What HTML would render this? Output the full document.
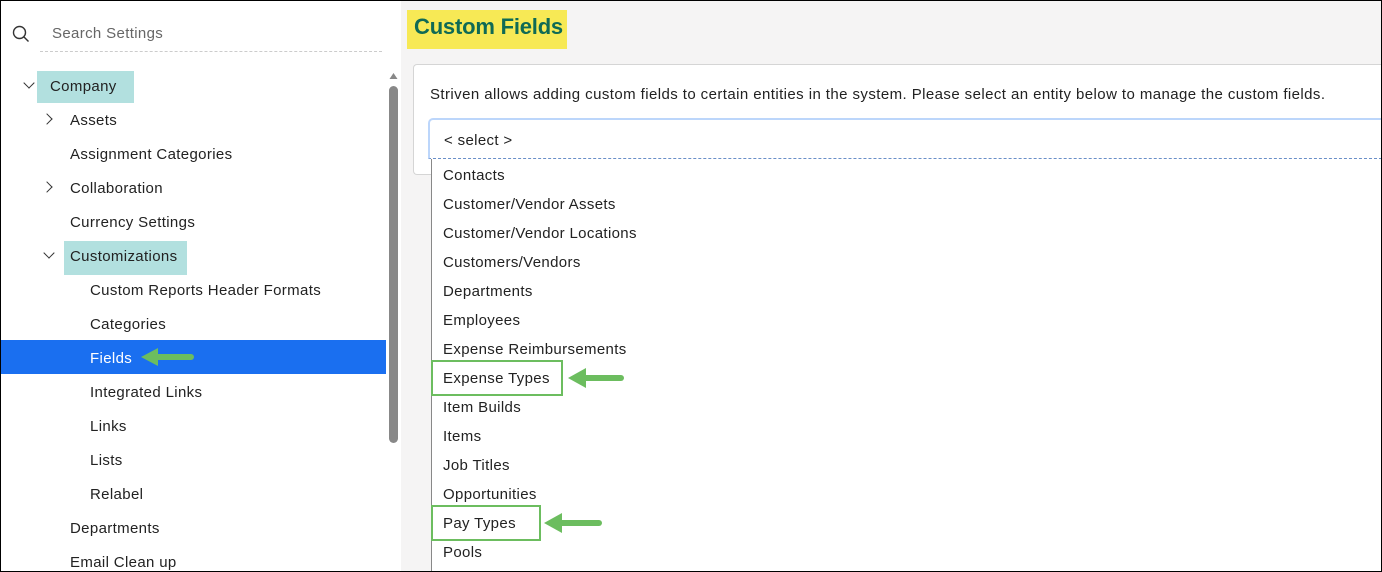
<!DOCTYPE html>
<html><head><meta charset="utf-8"><style>
*{margin:0;padding:0;box-sizing:border-box}
body{width:1382px;height:572px;overflow:hidden;font-family:"Liberation Sans",sans-serif;color:#222;background:#fff;position:relative}
.frame{position:absolute;inset:0;border:1px solid #000;z-index:10;pointer-events:none}
.side{position:absolute;left:0;top:0;width:401px;height:572px;background:#fff}
.main{position:absolute;left:401px;top:0;right:0;height:572px;background:#f5f4f4}
.t{position:absolute;font-size:15px;white-space:nowrap;letter-spacing:0.35px}
.hl{position:absolute;background:#b2e0df}
.chev{position:absolute;width:8px;height:8px;border-right:1.3px solid #333;border-bottom:1.3px solid #333}
.item{position:absolute;left:443px;font-size:15px;color:#222;letter-spacing:0.35px}
.gbox{position:absolute;border:2px solid #6cbd5f}
</style></head><body>
<div class="side">
  <svg style="position:absolute;left:12px;top:25px" width="18" height="18" viewBox="0 0 18 18"><circle cx="7.5" cy="7.5" r="6" fill="none" stroke="#333" stroke-width="1.4"/><line x1="12" y1="12" x2="16.5" y2="16.5" stroke="#333" stroke-width="1.4"/></svg>
  <div class="t" style="left:52px;top:25px;color:#666">Search Settings</div>
  <div style="position:absolute;left:40px;top:51px;width:342px;border-top:1px dashed #ccc"></div>
  <div class="hl" style="left:37px;top:71px;width:97px;height:32px"></div>
  <div class="chev" style="left:25px;top:79px;transform:rotate(45deg)"></div>
  <div class="t" style="left:50px;top:78px">Company</div>
  <div class="chev" style="left:43px;top:115px;transform:rotate(-45deg)"></div>
  <div class="t" style="left:70px;top:112px">Assets</div>
  <div class="t" style="left:70px;top:146px">Assignment Categories</div>
  <div class="chev" style="left:43px;top:183px;transform:rotate(-45deg)"></div>
  <div class="t" style="left:70px;top:180px">Collaboration</div>
  <div class="t" style="left:70px;top:214px">Currency Settings</div>
  <div class="hl" style="left:64px;top:241px;width:123px;height:34px"></div>
  <div class="chev" style="left:45px;top:249px;transform:rotate(45deg)"></div>
  <div class="t" style="left:70px;top:248px">Customizations</div>
  <div class="t" style="left:90px;top:282px">Custom Reports Header Formats</div>
  <div class="t" style="left:90px;top:316px">Categories</div>
  <div style="position:absolute;left:0;top:340px;width:386px;height:34px;background:#1a6ff0"></div>
  <div class="t" style="left:90px;top:350px;color:#fff">Fields</div>
  <svg style="position:absolute;left:138px;top:345px" width="60" height="24"><path d="M3 12 L20 3 L20 21 Z" fill="#6cbd5f"/><line x1="18" y1="12" x2="53" y2="12" stroke="#6cbd5f" stroke-width="6" stroke-linecap="round"/></svg>
  <div class="t" style="left:90px;top:384px">Integrated Links</div>
  <div class="t" style="left:90px;top:418px">Links</div>
  <div class="t" style="left:90px;top:452px">Lists</div>
  <div class="t" style="left:90px;top:486px">Relabel</div>
  <div class="t" style="left:70px;top:520px">Departments</div>
  <div class="t" style="left:70px;top:554px">Email Clean up</div>
  <svg style="position:absolute;left:389px;top:72px" width="9" height="8"><path d="M0.5 7 L4.5 1 L8.5 7 Z" fill="#888"/></svg>
  <div style="position:absolute;left:389px;top:86px;width:9px;height:357px;background:#888;border-radius:5px"></div>
</div>
<div class="main">
  <div style="position:absolute;left:6px;top:10px;width:160px;height:39px;background:#f7e955"></div>
  <div style="position:absolute;left:13px;top:14px;font-size:22px;font-weight:bold;color:#0f6a55;letter-spacing:-0.2px">Custom Fields</div>
  <div style="position:absolute;left:12px;top:64px;right:0;height:111px;background:#fff;border:1px solid #d5d5d5;border-right:none;border-radius:4px 0 0 4px"></div>
  <div class="t" style="left:29px;top:86px;color:#222;letter-spacing:0.42px">Striven allows adding custom fields to certain entities in the system. Please select an entity below to manage the custom fields.</div>
  <div style="position:absolute;left:27px;top:118px;right:0;height:41px;background:#fff;border:2px solid #bcd6fb;border-right:none;border-bottom:1px dashed #6a8fc8;border-radius:5px 0 0 0"></div>
  <div class="t" style="left:43px;top:132px">&lt; select &gt;</div>
</div>
<div style="position:absolute;left:431px;top:159px;right:0;height:413px;background:#fff;border-left:1px solid #888"></div>
<div class="item" style="top:167px">Contacts</div>
<div class="item" style="top:196px">Customer/Vendor Assets</div>
<div class="item" style="top:225px">Customer/Vendor Locations</div>
<div class="item" style="top:254px">Customers/Vendors</div>
<div class="item" style="top:283px">Departments</div>
<div class="item" style="top:312px">Employees</div>
<div class="item" style="top:341px">Expense Reimbursements</div>
<div class="item" style="top:370px">Expense Types</div>
<div class="item" style="top:399px">Item Builds</div>
<div class="item" style="top:428px">Items</div>
<div class="item" style="top:457px">Job Titles</div>
<div class="item" style="top:486px">Opportunities</div>
<div class="item" style="top:515px">Pay Types</div>
<div class="item" style="top:544px">Pools</div>
<div class="gbox" style="left:431px;top:360px;width:132px;height:36px"></div>
<svg style="position:absolute;left:565px;top:365px" width="62" height="26"><path d="M3 13 L21 3 L21 23 Z" fill="#6cbd5f"/><line x1="19" y1="13" x2="56" y2="13" stroke="#6cbd5f" stroke-width="6" stroke-linecap="round"/></svg>
<div class="gbox" style="left:431px;top:505px;width:110px;height:36px"></div>
<svg style="position:absolute;left:541px;top:510px" width="62" height="26"><path d="M3 13 L21 3 L21 23 Z" fill="#6cbd5f"/><line x1="19" y1="13" x2="58" y2="13" stroke="#6cbd5f" stroke-width="6" stroke-linecap="round"/></svg>
<div class="frame"></div>
</body></html>
